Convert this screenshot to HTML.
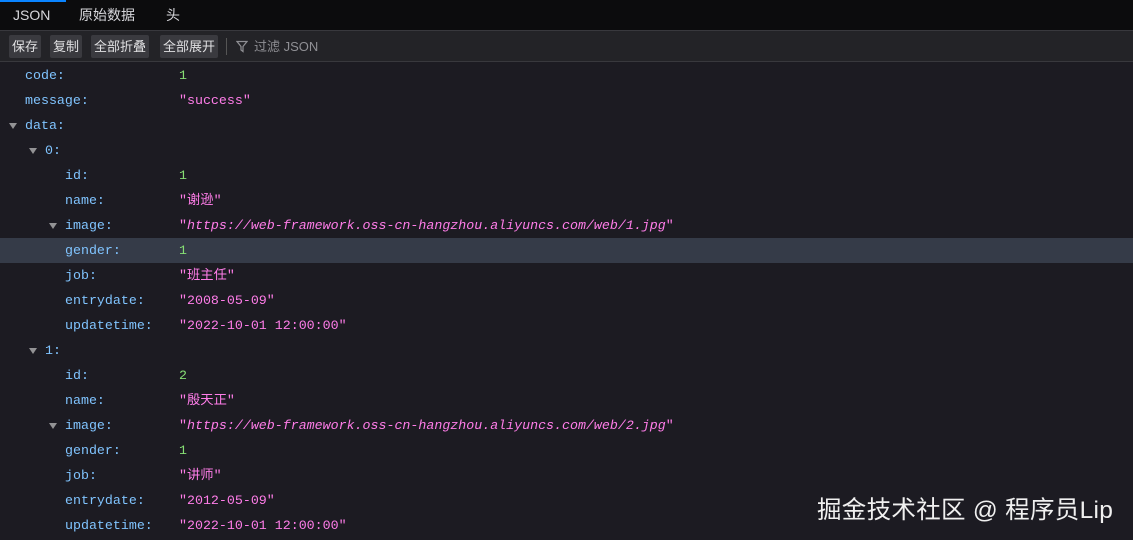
<!DOCTYPE html>
<html><head><meta charset="utf-8"><style>
*{margin:0;padding:0;box-sizing:border-box}
body{width:1133px;height:540px;background:#1c1b22;overflow:hidden;font-family:"Liberation Sans","Noto Sans CJK SC",sans-serif;position:relative}
.tabs{height:31px;background:#0c0c0d;position:relative;border-bottom:1px solid #38383d}
.tab{position:absolute;top:0;height:30px;line-height:30px;color:#d7d7db;font-size:14px}
.tabsel{position:absolute;left:0;top:0;width:66px;height:2px;background:#0a84ff}
.tool{height:31px;background:#232327;border-bottom:1px solid #38383d;position:relative}
.btn{position:absolute;top:4px;height:23px;line-height:23px;background:#3a3a3f;color:#e0e0e2;font-size:13px;padding:0 3px;border-radius:2px}
.row{position:absolute;left:0;width:1133px;height:25px;line-height:25px;font-family:"Liberation Mono","Noto Sans CJK SC",monospace;font-size:13.3px}
.k{position:absolute;color:#80c4ff}
.v{position:absolute;left:179px}
.n{color:#86de74}.s{color:#ff7de9}.i{font-style:italic}
.tw{position:absolute;width:0;height:0;border-left:4px solid transparent;border-right:4px solid transparent;border-top:6px solid #939395;top:10px}
.wm{position:absolute;left:817px;top:491px;color:#f0f0f0;font-size:24.5px;letter-spacing:0.3px;font-family:"Liberation Sans","Noto Sans CJK SC",sans-serif}
</style></head><body>
<div class="tabs"><div class="tabsel"></div>
<div class="tab" style="left:13px">JSON</div>
<div class="tab" style="left:79px">原始数据</div>
<div class="tab" style="left:166px">头</div></div>
<div class="tool">
<div class="btn" style="left:9px">保存</div>
<div class="btn" style="left:50px">复制</div>
<div class="btn" style="left:91px">全部折叠</div>
<div class="btn" style="left:160px">全部展开</div>
<div style="position:absolute;left:226px;top:7px;width:1px;height:17px;background:#555"></div>
<svg style="position:absolute;left:236px;top:9px" width="12" height="13" viewBox="0 0 12 13"><path d="M1 1.5h10L7 6.5v5l-2-1.5V6.5z" fill="none" stroke="#8f8f94" stroke-width="1.2"/></svg>
<div style="position:absolute;left:254px;top:0;line-height:31px;color:#8f8f94;font-size:13px">过滤 JSON</div>
</div>
<div class="row" style="top:63px"><span class="k" style="left:25px">code:</span><span class="v n">1</span></div>
<div class="row" style="top:88px"><span class="k" style="left:25px">message:</span><span class="v s">"success"</span></div>
<div class="row" style="top:113px"><i class="tw" style="left:9px"></i><span class="k" style="left:25px">data:</span></div>
<div class="row" style="top:138px"><i class="tw" style="left:29px"></i><span class="k" style="left:45px">0:</span></div>
<div class="row" style="top:163px"><span class="k" style="left:65px">id:</span><span class="v n">1</span></div>
<div class="row" style="top:188px"><span class="k" style="left:65px">name:</span><span class="v s">"谢逊"</span></div>
<div class="row" style="top:213px"><i class="tw" style="left:49px"></i><span class="k" style="left:65px">image:</span><span class="v s">"<span class="i">https://web-framework.oss-cn-hangzhou.aliyuncs.com/web/1.jpg</span>"</span></div>
<div class="row" style="top:238px;background:#353b48"><span class="k" style="left:65px">gender:</span><span class="v n">1</span></div>
<div class="row" style="top:263px"><span class="k" style="left:65px">job:</span><span class="v s">"班主任"</span></div>
<div class="row" style="top:288px"><span class="k" style="left:65px">entrydate:</span><span class="v s">"2008-05-09"</span></div>
<div class="row" style="top:313px"><span class="k" style="left:65px">updatetime:</span><span class="v s">"2022-10-01 12:00:00"</span></div>
<div class="row" style="top:338px"><i class="tw" style="left:29px"></i><span class="k" style="left:45px">1:</span></div>
<div class="row" style="top:363px"><span class="k" style="left:65px">id:</span><span class="v n">2</span></div>
<div class="row" style="top:388px"><span class="k" style="left:65px">name:</span><span class="v s">"殷天正"</span></div>
<div class="row" style="top:413px"><i class="tw" style="left:49px"></i><span class="k" style="left:65px">image:</span><span class="v s">"<span class="i">https://web-framework.oss-cn-hangzhou.aliyuncs.com/web/2.jpg</span>"</span></div>
<div class="row" style="top:438px"><span class="k" style="left:65px">gender:</span><span class="v n">1</span></div>
<div class="row" style="top:463px"><span class="k" style="left:65px">job:</span><span class="v s">"讲师"</span></div>
<div class="row" style="top:488px"><span class="k" style="left:65px">entrydate:</span><span class="v s">"2012-05-09"</span></div>
<div class="row" style="top:513px"><span class="k" style="left:65px">updatetime:</span><span class="v s">"2022-10-01 12:00:00"</span></div>
<div class="wm">掘金技术社区 @ 程序员Lip</div>
</body></html>
